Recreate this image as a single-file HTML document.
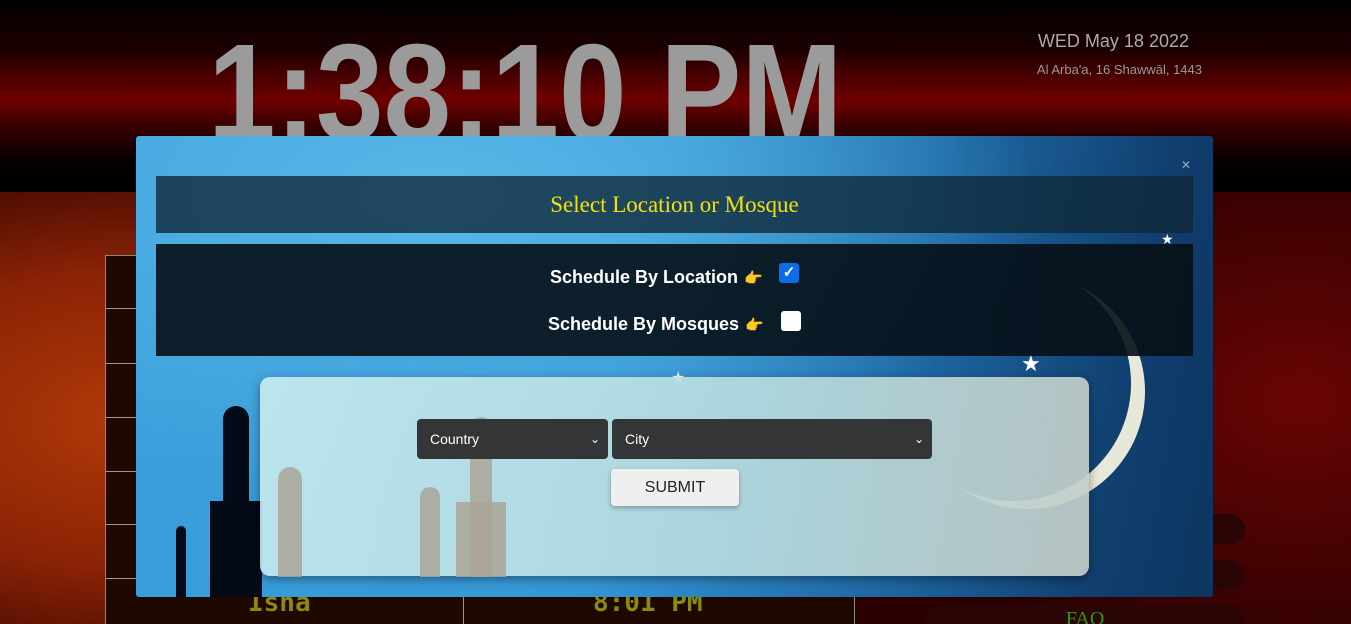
<!DOCTYPE html>
<html><head><meta charset="utf-8"><style>
*{margin:0;padding:0;box-sizing:border-box}
html,body{width:1351px;height:624px;overflow:hidden}
body{position:relative;font-family:"Liberation Sans",sans-serif;
background:radial-gradient(ellipse 500px 300px at 130px 420px,#b23a08 0%,#8a2206 50%,transparent 100%),radial-gradient(ellipse 400px 300px at 1300px 400px,#6a0404,#3a0202 70%,#2a0000);}
.top{position:absolute;left:0;top:0;width:1351px;height:192px;background:linear-gradient(#000 0%,#1a0000 25%,#5a0000 45%,#700000 52%,#3a0000 65%,#050000 85%,#000 100%)}
.clock{position:absolute;left:208px;top:24px;font-weight:bold;font-size:138px;color:#9b9b9b;transform:scaleX(0.88);transform-origin:left;line-height:138px;white-space:nowrap}
.date{position:absolute;right:162px;top:31px;color:#aaa;font-size:18px}
.hij{position:absolute;right:149px;top:62px;color:#999;font-size:13px}
.tbl{position:absolute;left:105px;top:255px;width:750px;height:380px;background:#1e0800;border:1px solid #888}
.tbl i{position:absolute;left:0;width:35px;border-top:1px solid #999}
.isha{position:absolute;left:248px;top:588px;color:#8a8a10;font-size:26px;font-weight:bold;font-family:"DejaVu Sans Mono",monospace}
.t801{position:absolute;left:593px;top:588px;color:#8a8a10;font-size:26px;font-weight:bold;font-family:"DejaVu Sans Mono",monospace}
.pill{position:absolute;left:925px;width:320px;height:30px;border-radius:15px;background:#2a0505}
.modal{position:absolute;left:136px;top:136px;width:1077px;height:461px;border-radius:3px;overflow:hidden;
background:radial-gradient(ellipse 600px 300px at 300px 60px,#5ab8e8,transparent),linear-gradient(100deg,#3aa0dc 0%,#3597d6 45%,#1f6aa6 70%,#103e6e 90%,#0d3560 100%)}
.h{position:absolute;left:20px;top:40px;width:1037px;height:57px;background:rgba(15,40,55,.78);color:#f4e10a;font-family:"Liberation Serif",serif;font-size:23px;text-align:center;line-height:57px}
.opt{position:absolute;left:20px;top:108px;width:1037px;height:112px;background:rgba(5,15,22,.9);color:#fff;font-weight:bold;font-size:18px}
.row{position:absolute;font-size:18px;white-space:nowrap}
.row span{font-size:15px;margin-left:6px}
.cb{position:absolute;width:20px;height:20px;border-radius:3px;background:#fff}
.cb.on{background:#0b6ee8}
.panel{position:absolute;left:124px;top:241px;width:829px;height:199px;border-radius:10px;background:linear-gradient(100deg,rgba(200,235,240,.9),rgba(185,220,222,.9) 60%,rgba(195,205,200,.92));box-shadow:0 3px 10px rgba(0,0,0,.4)}
.sel{position:absolute;top:42px;height:40px;background:#333537;border-radius:4px;color:#fff;font-size:14px;line-height:40px;padding-left:13px}
.sel b{position:absolute;right:8px;top:0;font-weight:normal;font-size:12px}
.btn{position:absolute;left:351px;top:92px;width:128px;height:37px;background:#efefef;border-radius:4px;text-align:center;line-height:37px;font-size:16px;color:#222;box-shadow:0 2px 5px rgba(0,0,0,.3)}
.moon{position:absolute;left:760px;top:130px;width:235px;height:235px;border-radius:50%;box-shadow:14px 8px 0 0 #f4f2e0;opacity:.95}
.m{position:absolute;background:#050a18}
.g{position:absolute;background:rgba(170,165,150,.85)}
.s{position:absolute;color:#fff;font-size:12px}
</style></head><body>
<div class="top"></div>
<div class="clock">1:38:10 PM</div>
<div class="date">WED May 18 2022</div>
<div class="hij">Al Arba'a, 16 Shawwāl, 1443</div>
<div class="tbl"><i style="top:52px"></i><i style="top:107px"></i><i style="top:161px"></i><i style="top:215px"></i><i style="top:268px"></i><i style="top:322px"></i><div style="position:absolute;left:357px;top:320px;height:60px;border-left:1px solid #999"></div></div>
<div class="isha">Isha</div><div class="t801">8:01 PM</div>
<div class="pill" style="top:514px"></div><div class="pill" style="top:560px"></div>
<div class="pill" style="top:605px;height:40px;color:#2a9a10;font-family:'Liberation Serif',serif;font-size:20px;text-align:center;line-height:28px">FAQ</div>
<div class="modal">
<div class="moon"></div>
<div class="m" style="left:87px;top:270px;width:26px;height:200px;border-radius:13px 13px 0 0"></div>
<div class="m" style="left:74px;top:365px;width:52px;height:110px"></div>
<div class="m" style="left:40px;top:390px;width:10px;height:80px;border-radius:5px 5px 0 0"></div>
<div class="h">Select Location or Mosque</div>
<div class="opt">
<div class="row" style="left:394px;top:23px">Schedule By Location<span>👉</span></div>
<div class="cb on" style="left:623px;top:19px;color:#fff;font-size:15px;text-align:center;line-height:20px">✓</div>
<div class="row" style="left:392px;top:70px">Schedule By Mosques<span>👉</span></div>
<div class="cb" style="left:625px;top:67px"></div>
</div>
<span class="s" style="left:1045px;top:22px;color:#9ab">✕</span>
<span class="s" style="left:885px;top:215px;font-size:22px">★</span>
<span class="s" style="left:535px;top:232px;font-size:16px">★</span>
<span class="s" style="left:1025px;top:95px;font-size:14px">★</span>
<div class="panel">
<div class="g" style="left:18px;top:90px;width:24px;height:110px;border-radius:12px 12px 0 0"></div>
<div class="g" style="left:160px;top:110px;width:20px;height:90px;border-radius:10px 10px 0 0"></div>
<div class="g" style="left:210px;top:40px;width:22px;height:160px;border-radius:11px 11px 0 0"></div>
<div class="g" style="left:196px;top:125px;width:50px;height:75px"></div>
<div class="sel" style="left:157px;width:191px">Country<b>⌄</b></div>
<div class="sel" style="left:352px;width:320px">City<b>⌄</b></div>
<div class="btn">SUBMIT</div>
</div>
</div>
</body></html>
